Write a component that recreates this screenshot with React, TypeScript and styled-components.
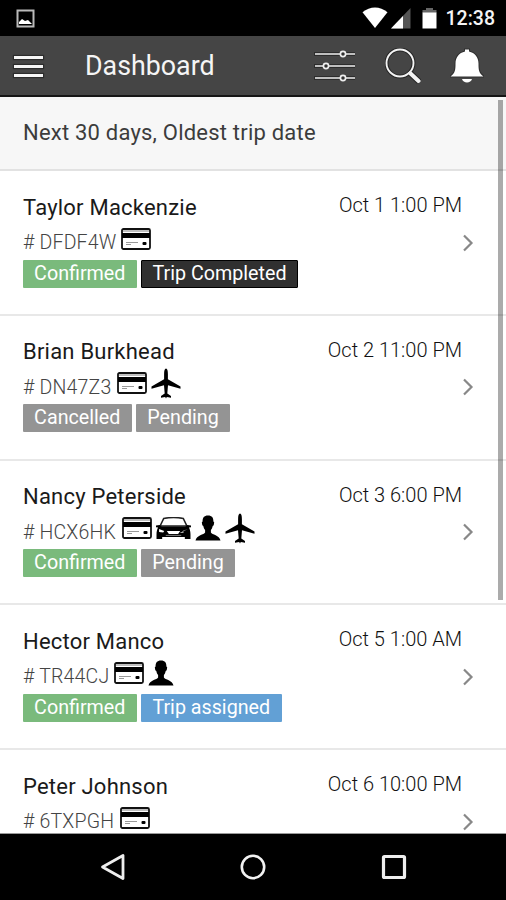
import React from 'react';
import styled, { createGlobalStyle } from 'styled-components';

const GlobalStyle = createGlobalStyle`
  * { box-sizing: border-box; }
  body { margin: 0; background: #fff; font-family: Roboto, 'Liberation Sans', sans-serif; }
  svg { display: block; flex: none; }
`;

const Screen = styled.div`
  width: 506px;
  height: 900px;
  display: flex;
  flex-direction: column;
  overflow: hidden;
  background: #fff;
`;

const StatusBar = styled.div`
  height: 36px;
  flex: none;
  display: flex;
  align-items: center;
  justify-content: space-between;
  padding: 0 11px 0 16px;
  background: #000;
`;

const StatusIcons = styled.div`
  display: flex;
  align-items: center;
`;

const Clock = styled.span`
  margin-left: 9px;
  font-size: 19.5px;
  font-weight: 500;
  line-height: 36px;
  padding-top: 2px;
  color: #f4f4f4;
`;

const AppBar = styled.header`
  height: 61px;
  flex: none;
  display: flex;
  align-items: center;
  padding-left: 14px;
  background: #454545;
  border-bottom: 2px solid #161616;
`;

const MenuIcon = styled.div`
  width: 29px;
  height: 21px;
  display: flex;
  flex-direction: column;
  justify-content: space-between;
  margin-top: 2px;
`;

const MenuBar = styled.span`
  height: 3px;
  background: #f6f6f6;
  box-shadow: 0 0 1px 1px #2c2c2c;
`;

const Title = styled.h1`
  flex: 1;
  margin: 1px 0 0 42px;
  font-size: 26.8px;
  font-weight: 400;
  line-height: 34px;
  color: #f5f5f5;
`;

const List = styled.main`
  position: relative;
  flex: 1;
  min-height: 0;
  overflow: hidden;
  border-bottom: 1px solid #999;
`;

const Filter = styled.div`
  height: 74px;
  padding: 22px 23px 0;
  background: #f7f7f7;
  border-bottom: 2px solid #e2e2e2;
  font-size: 22px;
  letter-spacing: 0.21px;
  line-height: 28px;
  color: #3c3c3c;
`;

const TripRow = styled.article`
  height: 144.8px;
  display: flex;
  justify-content: space-between;
  padding: 22.500px 32px 0 23px;
  border-bottom: 2px solid #e8e8e8;
`;

const Details = styled.div`
  display: flex;
  flex-direction: column;
`;

const Name = styled.div`
  height: 28px;
  font-size: 22px;
  letter-spacing: 0.22px;
  line-height: 28px;
  color: #1a1a1a;
`;

const Reference = styled.div`
  height: 38px;
  display: flex;
  align-items: flex-start;
  padding-top: 1px;
`;

const Code = styled.span<{ $width: number }>`
  width: ${(p) => p.$width}px;
  padding-top: 7.500px;
  font-size: 19.5px;
  font-weight: 300;
  letter-spacing: 0.2px;
  line-height: 26px;
  white-space: nowrap;
  color: #444;
`;

const Services = styled.div`
  display: flex;
  align-items: center;
  height: 32px;
  gap: 4px;
`;

const Tags = styled.div`
  display: flex;
  gap: 4.500px;
`;

const tones = { green: '#7aba7c', dark: '#303030', gray: '#949494', blue: '#62a0d5' };
type Tone = keyof typeof tones;

const Tag = styled.span<{ $tone: Tone; $width: number }>`
  width: ${(p) => p.$width}px;
  height: 28px;
  background: ${(p) => tones[p.$tone]};
  border: ${(p) => (p.$tone === 'dark' ? '1px solid #000' : '0')};
  border-radius: 1px;
  color: #fff;
  font-size: 19.7px;
  line-height: ${(p) => (p.$tone === 'dark' ? 26 : 28)}px;
  text-align: center;
  white-space: nowrap;
`;

const Side = styled.div`
  display: flex;
  flex-direction: column;
  align-items: flex-end;
`;

const DateText = styled.time`
  height: 26px;
  margin-top: -1.500px;
  margin-right: 12px;
  font-size: 20px;
  font-weight: 300;
  line-height: 26px;
  color: #111;
`;

const ChevronSlot = styled.div`
  margin-top: 15.500px;
`;

const ScrollThumb = styled.div`
  position: absolute;
  top: 3px;
  right: 3px;
  width: 5px;
  height: 500px;
  background: rgba(0, 0, 0, 0.33);
`;

const NavBar = styled.nav`
  height: 66px;
  flex: none;
  display: grid;
  grid-template-columns: repeat(3, 140.5px);
  justify-content: center;
  justify-items: center;
  align-items: center;
  background: #000;
`;

const PictureIcon = () => (
  <svg width="19" height="19" viewBox="0 0 19 19">
    <rect x="1.5" y="1.5" width="16" height="16" fill="none" stroke="#b9b9b9" strokeWidth="2" />
    <path d="M3 15v-2l3-3 3 2 3-1 4 4z" fill="#fff" />
  </svg>
);
const WifiIcon = () => (
  <svg width="26" height="22" viewBox="0 0 26 22">
    <path d="M.5 5.3C8-1.2 18-1.2 25.5 5.3L13 21z" fill="#fff" />
  </svg>
);
const SignalIcon = () => (
  <svg width="20" height="21" viewBox="0 0 20 21">
    <path d="M19.5 0v20.5H0z" fill="#555" />
    <path d="M12 8v12.5H0z" fill="#fff" />
  </svg>
);
const BatteryIcon = () => (
  <svg width="15" height="22" viewBox="0 0 15 22">
    <path d="M4 1h7v2h3.500v3H.5V3H4z" fill="#666" />
    <path d="M.5 5.500h14V21.500H.5z" fill="#fff" />
  </svg>
);
const SlidersIcon = () => (
  <svg width="42" height="34" viewBox="0 0 42 34">
    <g fill="none" stroke="#2c2c2c" strokeWidth="4">
      <path d="M0 5H41M0 17H41M0 29H41" />
    </g>
    <g fill="#303030" stroke="#eee" strokeWidth="1.7">
      <path d="M1 5H41M1 17H41M1 29H41" />
      <circle cx="29" cy="5" r="2.6" />
      <circle cx="12" cy="17" r="2.6" />
      <circle cx="29" cy="29" r="2.6" />
    </g>
  </svg>
);
const SearchIcon = () => (
  <svg width="36" height="36" viewBox="0 0 36 36">
    <g fill="none" stroke="#262626">
      <circle cx="15" cy="15" r="13.5" strokeWidth="4" />
      <path d="M24.5 24.5L34 33.5" strokeWidth="6" />
    </g>
    <g fill="none" stroke="#f4f4f4">
      <circle cx="15" cy="15" r="13.5" strokeWidth="1.9" />
      <path d="M24 24l2 2" strokeWidth="2" />
      <path d="M25.5 25.5l8 7.5" strokeWidth="4" strokeLinecap="round" />
    </g>
  </svg>
);
const BellIcon = () => (
  <svg width="34" height="36" viewBox="0 0 34 36">
    <path
      d="M15 3.500V1.500h4v2c6 1.400 9.500 6 9.500 12 0 7 .5 9.500 5 13H.5C5 25 5.500 22.500 5.500 15.500c0-6 3.500-10.600 9.500-12z"
      fill="#fff"
      stroke="#303030"
      strokeWidth="2"
      paintOrder="stroke"
    />
    <path d="M12 31h10c-1 4.500-9 4.500-10 0z" fill="#fff" />
  </svg>
);
const CardIcon = () => (
  <svg width="30" height="22" viewBox="0 0 30 22">
    <rect x="1" y="1" width="28" height="20" rx="1.500" fill="#fff" stroke="#111" strokeWidth="1.800" />
    <path d="M2 3h26" stroke="#aaa" strokeWidth="1.500" />
    <path d="M1 5h28v5H1z" fill="#000" />
    <path d="M5 14.500h12M5 16.500h5" stroke="#999" strokeWidth="1" />
    <rect x="21.500" y="14" width="4" height="3" rx="1" fill="#000" />
  </svg>
);
const PlaneIcon = () => (
  <svg width="30" height="31" viewBox="0 0 30 31">
    <path
      d="M15 .5c1.300 0 1.900 2.200 1.900 5.500v5.200L29.500 18.500v2.200l-12.500-3.500-.7 8.300 3.700 2.500v1.700l-4.200-.7-.8 1.500-.8-1.500-4.200.7V28l3.700-2.500-.7-8.300L.5 20.700v-2.200l12.600-7.300V6c0-3.300.6-5.500 1.900-5.500z"
      fill="#000"
    />
  </svg>
);
const CarIcon = () => (
  <svg width="35" height="23" viewBox="0 0 34 23" preserveAspectRatio="none">
    <path d="M7.500 1.500Q17-.5 26.500 1.500L30 9H4z" fill="#fff" stroke="#222" strokeWidth="1.500" />
    <path
      d="M0 8.500l3.500-.5 2 1.500h23l2-1.500 3.500.5v1.800l-2 .2c1 2 1.500 4 1.500 7V22h-5.500v-2h-22v2H.5v-4.500c0-3 .5-5 1.500-7l-2-.2z"
      fill="#000"
    />
    <path d="M3 12l5 2-1 1.500-4-.5zM31 12l-5 2 1 1.500-4 .5zM10.500 14h13l-2 3h-9z" fill="#fff" />
    <path d="M9.500 18.400h15" stroke="#ccc" strokeWidth=".6" />
  </svg>
);
const PersonIcon = () => (
  <svg width="26" height="26" viewBox="0 0 26 26">
    <path
      d="M13 .5c4 0 5.500 2.300 5.400 6l.8.800-.5 3-1 .7c-.4 2-1 3-1.800 4v2.500c1 2.200 8.600 2.500 9.600 8H.5c1-5.500 8.600-5.800 9.600-8V15c-.8-1-1.400-2-1.800-4l-1-.7-.5-3 .8-.8C7.500 2.800 9 .5 13 .5z"
      fill="#000"
    />
  </svg>
);
const Chevron = () => (
  <svg width="12" height="18" viewBox="0 0 12 18">
    <path d="M2 1.500L9.500 9 2 16.500" fill="none" stroke="#888" strokeWidth="2.200" />
  </svg>
);

const serviceIcons = { card: CardIcon, car: CarIcon, person: PersonIcon, plane: PlaneIcon };

interface Trip {
  name: string;
  code: string;
  codeWidth: number;
  date: string;
  services: (keyof typeof serviceIcons)[];
  tags: [string, Tone, number][];
}

const trips: Trip[] = [
  { name: 'Taylor Mackenzie', code: 'DFDF4W', codeWidth: 98, date: 'Oct 1 1:00 PM', services: ['card'], tags: [['Confirmed', 'green', 113.5], ['Trip Completed', 'dark', 157]] },
  { name: 'Brian Burkhead', code: 'DN47Z3', codeWidth: 93.5, date: 'Oct 2 11:00 PM', services: ['card', 'plane'], tags: [['Cancelled', 'gray', 108.5], ['Pending', 'gray', 94]] },
  { name: 'Nancy Peterside', code: 'HCX6HK', codeWidth: 98.5, date: 'Oct 3 6:00 PM', services: ['card', 'car', 'person', 'plane'], tags: [['Confirmed', 'green', 113.5], ['Pending', 'gray', 94]] },
  { name: 'Hector Manco', code: 'TR44CJ', codeWidth: 91, date: 'Oct 5 1:00 AM', services: ['card', 'person'], tags: [['Confirmed', 'green', 113.5], ['Trip assigned', 'blue', 140.5]] },
  { name: 'Peter Johnson', code: '6TXPGH', codeWidth: 97, date: 'Oct 6 10:00 PM', services: ['card'], tags: [] },
];

const StatusGap = styled.span<{ $w: number }>`
  width: ${(p) => p.$w}px;
`;

const Actions = styled.div`
  display: flex;
  align-items: center;
  padding-right: 22px;
  gap: 29px;
`;

export default function App() {
  return (
    <>
      <GlobalStyle />
      <Screen>
        <StatusBar>
          <PictureIcon />
          <StatusIcons>
            <WifiIcon />
            <StatusGap $w={3} />
            <SignalIcon />
            <StatusGap $w={11} />
            <BatteryIcon />
            <Clock>12:38</Clock>
          </StatusIcons>
        </StatusBar>
        <AppBar>
          <MenuIcon>
            <MenuBar />
            <MenuBar />
            <MenuBar />
          </MenuIcon>
          <Title>Dashboard</Title>
          <Actions>
            <SlidersIcon />
            <SearchIcon />
            <BellIcon />
          </Actions>
        </AppBar>
        <List>
          <Filter>Next 30 days, Oldest trip date</Filter>
          {trips.map((trip) => (
            <TripRow key={trip.code}>
              <Details>
                <Name>{trip.name}</Name>
                <Reference>
                  <Code $width={trip.codeWidth}># {trip.code}</Code>
                  <Services>
                    {trip.services.map((s) => {
                      const Icon = serviceIcons[s];
                      return <Icon key={s} />;
                    })}
                  </Services>
                </Reference>
                <Tags>
                  {trip.tags.map(([label, tone, width]) => (
                    <Tag key={label} $tone={tone} $width={width}>{label}</Tag>
                  ))}
                </Tags>
              </Details>
              <Side>
                <DateText>{trip.date}</DateText>
                <ChevronSlot>
                  <Chevron />
                </ChevronSlot>
              </Side>
            </TripRow>
          ))}
          <ScrollThumb />
        </List>
        <NavBar>
          <svg width="28" height="28" viewBox="0 0 28 28">
            <path d="M24 2.500v23L3.500 14z" fill="none" stroke="#eee" strokeWidth="2.800" strokeLinejoin="round" />
          </svg>
          <svg width="28" height="28" viewBox="0 0 28 28">
            <circle cx="14" cy="14" r="11.200" fill="none" stroke="#f2f2f2" strokeWidth="2.600" />
          </svg>
          <svg width="28" height="28" viewBox="0 0 28 28">
            <rect x="3.500" y="3.500" width="21" height="21" rx="1" fill="none" stroke="#eee" strokeWidth="3.200" />
          </svg>
        </NavBar>
      </Screen>
    </>
  );
}
